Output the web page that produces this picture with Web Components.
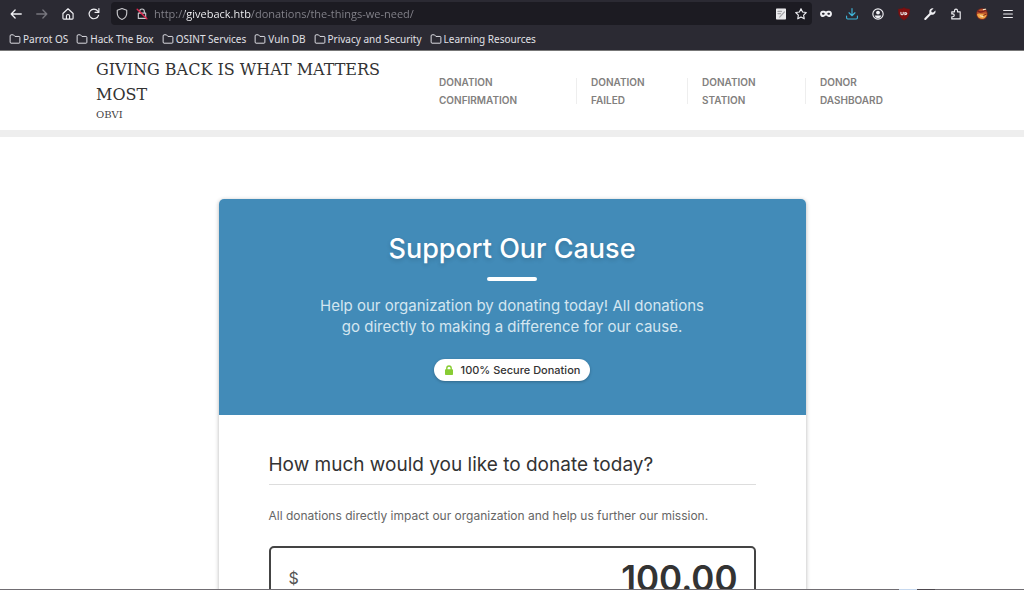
<!DOCTYPE html>
<html lang="en">
<head>
<meta charset="utf-8">
<title>The Things We Need</title>
<style>
  :root { --sans: Inter, "Open Sans", sans-serif; --serif: "DejaVu Serif", serif; --ui: "Noto Sans", sans-serif; --accent: #428bb8; }
  * { box-sizing: border-box; }
  body { margin: 0; height: 100vh; display: flex; flex-direction: column; overflow: hidden; background: #fff; font-family: var(--sans); }
  main { flex: 1; min-height: 0; overflow: hidden; }
</style>
</head>
<body>
<browser-chrome>
  <bookmark-link>Parrot OS</bookmark-link>
  <bookmark-link>Hack The Box</bookmark-link>
  <bookmark-link>OSINT Services</bookmark-link>
  <bookmark-link>Vuln DB</bookmark-link>
  <bookmark-link>Privacy and Security</bookmark-link>
  <bookmark-link>Learning Resources</bookmark-link>
</browser-chrome>
<main>
  <site-header>
    <span slot="title">Giving Back Is What Matters Most</span>
    <span slot="tagline">OBVI</span>
    <nav-link>Donation Confirmation</nav-link>
    <nav-link>Donation Failed</nav-link>
    <nav-link>Donation Station</nav-link>
    <nav-link>Donor Dashboard</nav-link>
  </site-header>
  <donation-card>
    <span slot="heading">Support Our Cause</span>
    <span slot="intro">Help our organization by donating today! All donations go directly to making a difference for our cause.</span>
    <secure-badge slot="badge">100% Secure Donation</secure-badge>
    <span slot="question">How much would you like to donate today?</span>
    <span slot="note">All donations directly impact our organization and help us further our mission.</span>
    <amount-field slot="amount" value="100.00">$</amount-field>
  </donation-card>
</main>
<panel-edge></panel-edge>

<script>
const define = (name, html, setup) => customElements.define(name, class extends HTMLElement {
  constructor() {
    super();
    const root = this.attachShadow({ mode: 'open' });
    root.innerHTML = '<style>*{box-sizing:border-box}</style>' + html;
    if (setup) setup(this, root);
  }
});

const icons = {
  back: '<path d="M14 8H2.500M7 3.500 2.500 8l4.500 4.500" stroke-width="1.500"/>',
  forward: '<path d="M2 8h11.500M9 3.500 13.500 8 9 12.500" stroke-width="1.500"/>',
  home: '<path d="M2.200 7.400 8 2l5.800 5.400v5.400a1 1 0 0 1-1 1H3.200a1 1 0 0 1-1-1zM6.200 13.600v-3.200a1.800 1.800 0 0 1 3.600 0v3.200"/>',
  reload: '<path d="M13.200 9.400A5.500 5.500 0 1 1 12.200 4.400L13.400 5.800M13.600 1.800v4.400H9.200"/>',
  shield: '<path d="M8 1.800 13.400 3.800v3.400c0 3.400-2.200 5.800-5.400 7-3.200-1.200-5.400-3.600-5.400-7V3.800z"/>',
  lock: '<path d="M5.300 7V5a2.700 2.700 0 0 1 5.400 0v2M3.800 7h8.400v6H3.800z"/><path d="m2.500 2.500 11 11" stroke="#e22850" stroke-width="1.600"/>',
  note: '<path d="M3 2.500h10v11H3z" fill="#e8e8ea" stroke="#f4f4f6"/><path d="M4.500 5h4M4.500 7.500h3M6.500 11.500 12 5.500" stroke="#a2a2a6"/>',
  star: '<path d="m8 1.900 1.800 3.800 4.200.6-3 3 .7 4.200L8 11.500l-3.700 2 .7-4.200-3-3 4.200-.6z"/>',
  mask: '<path fill="currentColor" stroke="none" fill-rule="evenodd" d="M4.300 4.300C6 4 7 5 8 5s2-1 3.700-.7c2.100.2 3.100 1.700 3.100 3.600 0 2-1.400 3.600-3.400 3.600-1.600 0-2.300-1.700-3.400-1.700s-1.800 1.700-3.400 1.700c-2 0-3.400-1.600-3.400-3.600 0-1.900 1-3.400 3.100-3.600zM5 6.600c-1 0-1.700.6-1.700 1.100S4.100 8.800 5 8.800s1.500-.6 1.500-1.100S5.900 6.600 5 6.600zm6 0c-.9 0-1.500.6-1.500 1.100s.6 1.100 1.500 1.100 1.700-.6 1.700-1.100-.7-1.100-1.700-1.100z"/>',
  download: '<path stroke="#3fb4d8" d="M8 1.800v8M4.600 6.600 8 10l3.400-3.400M1.800 10.500v1.900a1.300 1.300 0 0 0 1.300 1.300h9.800a1.300 1.300 0 0 0 1.300-1.300v-1.900"/>',
  account: '<circle cx="8" cy="8" r="5.900"/><circle cx="8" cy="6.400" r="2.200" fill="currentColor" stroke="none"/><path fill="currentColor" stroke="none" d="M4.200 9.600h7.600c-.5 1.900-2 3-3.800 3s-3.300-1.100-3.800-3z"/>',
  ublock: '<path fill="#800f0f" stroke="#6a1616" stroke-width=".6" d="M8 .8c2 1.300 4.400 1.500 6.400 1.500 0 6.300-.9 9.300-6.400 12.700C2.500 11.600 1.600 8.600 1.600 2.300c2 0 4.400-.2 6.400-1.500z"/><path stroke="#eee" stroke-width="1.200" d="M4.500 6v1.600a1.300 1.300 0 0 0 2.600 0V6M9 6.200v2.600c3 0 3-2.600 0-2.600z"/>',
  wrench: '<path d="m2.600 13.600 6.400-6.400" stroke-width="2.400"/><path fill="currentColor" stroke="none" d="M14.200 4 11.600 6.400 9.800 6l-.4-1.800L12 1.600C9.500 1 7.200 2.800 7.200 5.300c0 .8.100 1.300.4 1.900l1.500 1.500c3 1 5.900-1.500 5.100-4.700z"/>',
  puzzle: '<path d="M3.200 5.500h3.100V4.200a1.700 1.700 0 0 1 3.400 0v1.300h3.100v8.100H3.200v-2.500h1.200a1.600 1.600 0 0 0 0-3.200H3.200z"/>',
  fox: '<circle cx="8" cy="8" r="6.300" fill="#b8502a" stroke="#6c2018" stroke-width=".8"/><path fill="#efa545" stroke="none" d="M2.300 8.200C5 6 8 8.800 13.400 7c.2 4-2.200 6.300-5.500 6.300S2.700 11 2.300 8.200z"/><path d="M3.500 4.700c3 2.300 6 .4 9-1" stroke="#7b1e1e" stroke-width="1.700"/><path d="m9.500 3 2.700-.5M6 10l3 1" stroke="#f6e0bd"/><path d="m10 9.500 3-1.500" stroke="#8b2a1a"/>',
  menu: '<path d="M3 4h10M3 8h10M3 12h10"/>',
  folder: '<path d="M1.500 3.600a1.200 1.200 0 0 1 1.200-1.200h3.200l2 2.200h5.400a1.200 1.200 0 0 1 1.200 1.200v6.600a1.200 1.200 0 0 1-1.200 1.200H2.700a1.200 1.200 0 0 1-1.200-1.200z"/>'
};

define('ui-icon', `<style>
  :host { display: block; flex: none; width: 14px; height: 14px; }
  svg { display: block; width: 100%; height: 100%; fill: none; stroke: currentColor; stroke-width: 1.3; stroke-linecap: round; stroke-linejoin: round; }
</style><svg viewBox="0 0 16 16" aria-hidden="true"></svg>`, (el, root) => {
  root.querySelector('svg').innerHTML = icons[el.getAttribute('name')] || '';
});

define('tool-button', `<style>
  :host { display: block; flex: none; width: 26px; }
  button { display: grid; place-items: center; width: 100%; height: 23px; padding: 0; border: 0; background: none; color: inherit; }
</style><button type="button"></button>`, (el, root) => {
  const button = root.querySelector('button');
  button.setAttribute('aria-label', el.getAttribute('label'));
  button.innerHTML = `<ui-icon name="${el.getAttribute('icon')}"></ui-icon>`;
});

define('bookmark-link', `<style>
  :host { display: block; }
  a { display: flex; align-items: center; gap: 2px; color: inherit; text-decoration: none; white-space: nowrap; }
  ui-icon { width: 12px; height: 12px; }
</style><a href="#"><ui-icon name="folder"></ui-icon><span><slot></slot></span></a>`);

define('address-bar', `<style>
  :host { display: flex; align-items: center; flex: 1; min-width: 0; height: 23px; padding: 0 1px; border-radius: 4px; background: #1c1b22; }
  tool-button { width: 20px; }
  .secure { color: #c8c8cc; }
  input { flex: 1; min-width: 0; height: 20px; margin: 0; padding: 0 0 0 2px; border: 0; outline: 0; font: 11px/20px "Open Sans", var(--ui); color: #8f8e96;
    background: linear-gradient(90deg, #85848c 33px, #fbfbfe 33px 99px, #85848c 99px); -webkit-background-clip: text; background-clip: text; -webkit-text-fill-color: transparent; }
</style>
<tool-button class="secure" icon="shield" label="Tracking protection"></tool-button>
<tool-button class="secure" icon="lock" label="Connection not secure"></tool-button>
<input type="text" aria-label="Address" value="http://giveback.htb/donations/the-things-we-need/" spellcheck="false">
<tool-button icon="note" label="Notes"></tool-button>
<tool-button icon="star" label="Bookmark this page"></tool-button>`);

define('browser-chrome', `<style>
  :host { display: block; flex: none; background: #2b2a33; color: #f0f0f4; border-bottom: 1px solid #777; font: 10px/20px var(--ui); }
  .tools { display: flex; align-items: center; padding: 2px 3px; }
  .group { display: flex; }
  .first { margin-right: 4px; }
  .last { margin-left: 1px; }
  .dim { color: #77767e; }
  nav { display: flex; gap: 8px; padding: 2px 9px 1px; color: #e0e0e6; }
</style>
<div class="tools">
  <div class="group first">
    <tool-button icon="back" label="Back"></tool-button>
    <tool-button class="dim" icon="forward" label="Forward"></tool-button>
    <tool-button icon="home" label="Home"></tool-button>
    <tool-button icon="reload" label="Reload"></tool-button>
  </div>
  <address-bar></address-bar>
  <div class="group last">
    <tool-button icon="mask" label="Containers"></tool-button>
    <tool-button icon="download" label="Downloads"></tool-button>
    <tool-button icon="account" label="Account"></tool-button>
    <tool-button icon="ublock" label="Content blocker"></tool-button>
    <tool-button icon="wrench" label="Developer tools"></tool-button>
    <tool-button icon="puzzle" label="Extensions"></tool-button>
    <tool-button icon="fox" label="Proxy"></tool-button>
    <tool-button icon="menu" label="Menu"></tool-button>
  </div>
</div>
<nav aria-label="Bookmarks"><slot></slot></nav>`);

define('nav-link', `<style>
  :host { display: block; padding: 0 15px; background: linear-gradient(#eee, #eee) left / 1px 26px no-repeat; }
  :host(:first-of-type) { background: none; }
  a { display: block; width: min-content; color: #82807e; text-decoration: none; text-transform: uppercase; font: 600 10px/18px var(--sans); }
</style><a href="#"><slot></slot></a>`);

define('site-header', `<style>
  :host { display: block; border-bottom: 7px solid #eee; }
  header { display: grid; grid-template-columns: 328fr 504fr; align-items: center; width: 81.25%; margin: 0 auto; padding: 6px 0 7px; }
  a { color: #333; text-decoration: none; text-transform: uppercase; }
  h1 { margin: 0; font: 400 16px/25px var(--serif); }
  p { margin: 0; color: #444; font: 10px/16px var(--serif); }
  nav { display: grid; grid-template-columns: 152fr 111fr 118fr 123fr; padding-top: 2px; }
</style>
<header>
  <div><h1><a href="#"><slot name="title"></slot></a></h1><p><slot name="tagline"></slot></p></div>
  <nav aria-label="Main"><slot></slot></nav>
</header>`);

define('secure-badge', `<style>
  :host { display: inline-flex; align-items: center; gap: 7px; height: 22px; padding: 0 10px; border-radius: 11px; background: #fff; color: #333; box-shadow: 0 1px 3px rgba(0,0,0,.25); font: 500 11px/22px var(--sans); }
  svg { width: 10px; height: 10px; }
</style>
<svg viewBox="0 0 10 10" aria-hidden="true"><path d="M2.800 5V3.200a2.200 2.200 0 0 1 4.400 0V5" fill="none" stroke="#8c3" stroke-width="1.400"/><rect x="1" y="4.300" width="8" height="5.700" rx=".8" fill="#8c3"/></svg>
<span><slot></slot></span>`);

define('amount-field', `<style>
  :host { display: block; }
  div { display: flex; align-items: center; height: 64px; padding: 0 16px 0 18px; border: 2px solid #444; border-radius: 5px; background: #fff; }
  label { color: #555; font: 400 16px/20px var(--sans); }
  input { flex: 1; min-width: 0; height: 48px; padding: 0; border: 0; outline: 0; background: none; color: #333; text-align: right; font: 600 35px/48px var(--sans); }
</style>
<div><label for="amount"><slot></slot></label><input id="amount" type="text" inputmode="decimal" aria-label="Donation amount"></div>`, (el, root) => {
  root.querySelector('input').value = el.getAttribute('value');
});

define('donation-card', `<style>
  :host { display: block; width: calc(100% - 32px); max-width: 587px; margin: 62px auto 0; border-radius: 5px; background: #fff; box-shadow: 0 1px 4px rgba(0,0,0,.3); }
  .hero { display: flex; flex-direction: column; align-items: center; padding: 34px 50px; border-radius: 5px 5px 0 0; background: var(--accent); color: #fff; text-align: center; }
  h2 { margin: 0; font: 500 27px/32px var(--sans); text-shadow: 0 2px 4px rgba(0,0,0,.15); }
  hr { width: 50px; height: 4px; margin: 12px 0 14px; border: 0; border-radius: 2px; background: #fff; }
  .intro { max-width: 404px; margin: 0 0 22px; color: #d4e6f0; font: 400 15px/21px var(--sans); }
  .body { padding: 37px 50px 50px; }
  h3 { margin: 0; padding-bottom: 6px; border-bottom: 1px solid #ddd; color: #333; font: 400 19px/26px var(--sans); }
  .note { margin: 20px 0 19px; color: #666; font: 400 12px/22px var(--sans); }
</style>
<section class="hero">
  <h2><slot name="heading"></slot></h2>
  <hr>
  <p class="intro"><slot name="intro"></slot></p>
  <slot name="badge"></slot>
</section>
<section class="body">
  <h3><slot name="question"></slot></h3>
  <p class="note"><slot name="note"></slot></p>
  <slot name="amount"></slot>
</section>`);

define('panel-edge', `<style>
  :host { display: flex; flex: none; height: 1px; background: #706d72; }
  i { width: 18px; margin-left: auto; background: #c6d8ee; }
  b { width: 18px; margin-right: 89px; background: #4d484e; }
</style><i></i><b></b>`);
</script>
</body>
</html>
